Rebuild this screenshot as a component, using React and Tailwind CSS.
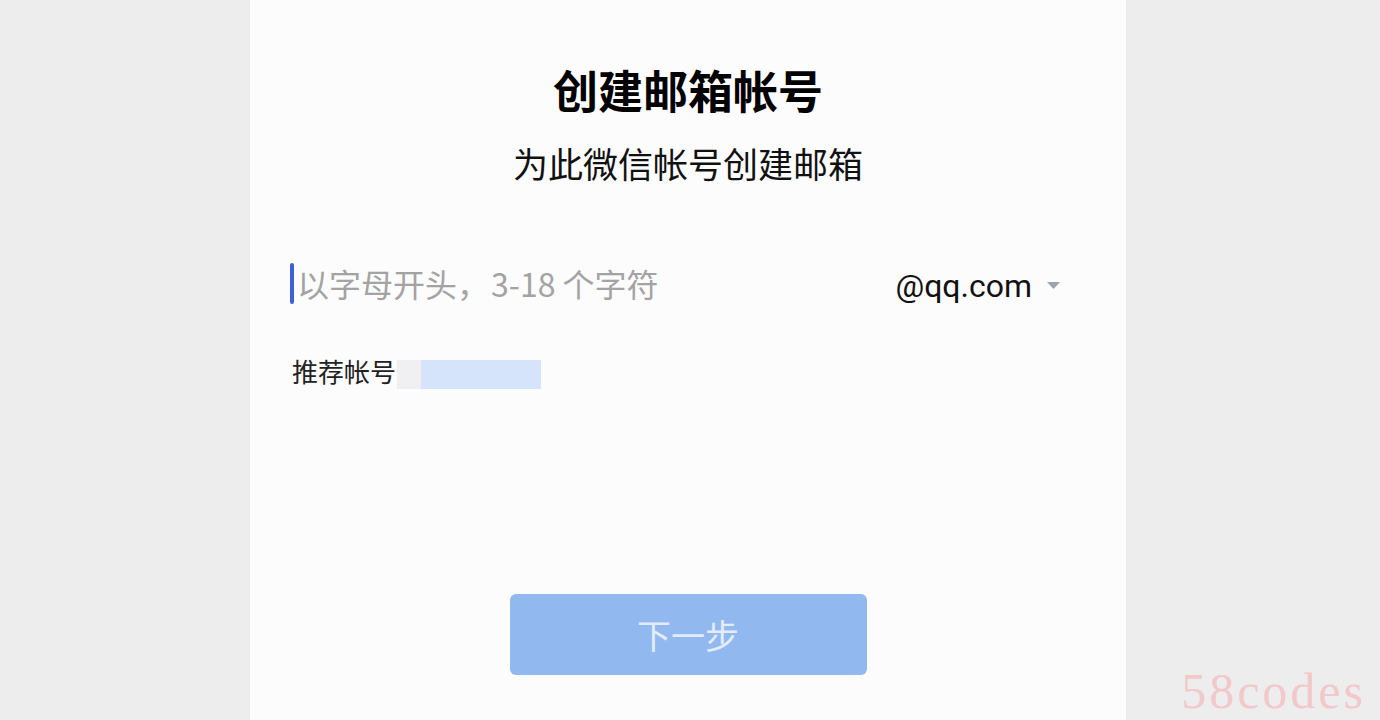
import React from "react";

export default function App() {
  return (
    <div
      className="relative flex h-[720px] w-full overflow-hidden bg-[#ededed]"
      style={{ fontFamily: '"Noto Sans CJK SC", "Noto Sans", sans-serif' }}
    >
      <div className="w-[250px] shrink-0" />

      {/* panel */}
      <div className="flex w-[876px] shrink-0 flex-col bg-[#fcfcfd]">
        <h1 className="mt-[67px] text-center text-[45px] font-bold leading-[46px] text-black">
          创建邮箱帐号
        </h1>
        <p className="mt-[30px] text-center text-[35px] leading-[40px] text-[#111]">
          为此微信帐号创建邮箱
        </p>

        {/* input row */}
        <div className="mt-[78px] flex h-[44px] items-center pl-[40px] pr-[66px]">
          <span className="h-[41px] w-[4px] rounded-sm bg-[#3f5fd9]" />
          <span className="ml-[3px] flex text-[32px] leading-none text-[#a3a3a3]">
            <span>以字母开头，</span>
            <span className="ml-[2px]">3-18 个字符</span>
          </span>
          <div className="ml-auto flex items-center pt-[5px]">
            <span
              className="text-[32px] leading-none text-[#111]"
              style={{ fontFamily: 'Roboto, "Noto Sans CJK SC", sans-serif' }}
            >
              @qq.com
            </span>
            <svg className="ml-[15px]" width="13" height="8" viewBox="0 0 13 8">
              <path d="M0 0 H13 L6.5 7 Z" fill="#9ea3b4" />
            </svg>
          </div>
        </div>

        {/* recommended */}
        <div className="mt-[55px] flex items-center pl-[42px]">
          <span className="-mt-[8px] text-[26px] leading-none text-[#222]">推荐帐号</span>
          <span className="ml-[1px] h-[29px] w-[24px] bg-[#f0f0f2]" />
          <span className="h-[29px] w-[120px] bg-[#d6e4fb]" />
        </div>

        {/* button */}
        <button className="mx-auto mt-[205px] flex h-[81px] w-[357px] items-center justify-center rounded-[6px] bg-[#92b9ef] text-[34px] text-[#e3ecfa]">
          下一步
        </button>
      </div>

      <div className="flex-1" />

      <span
        className="absolute bottom-[4px] right-[14px] text-[50px] leading-none tracking-[3px] text-[#f2c8ca]"
        style={{ fontFamily: '"Liberation Serif", serif' }}
      >
        58codes
      </span>
    </div>
  );
}
